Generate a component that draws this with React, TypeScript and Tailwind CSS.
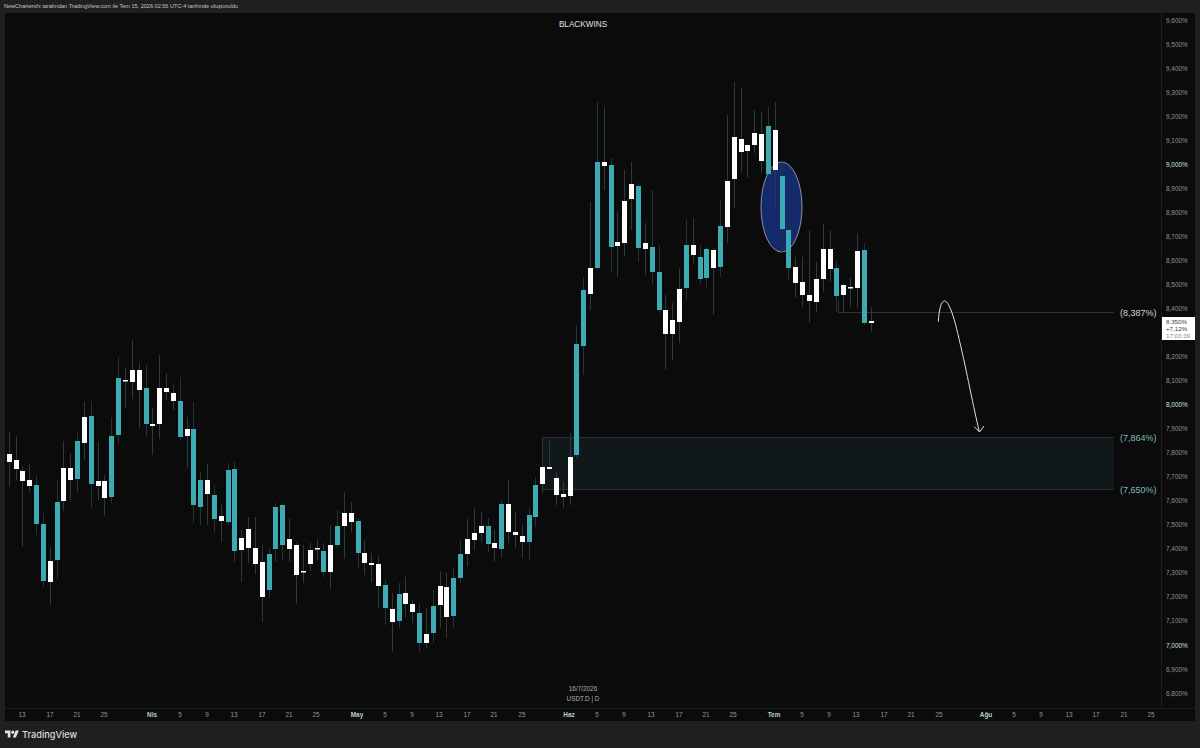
import React from "react";

type C = [number, number, number, number, number];
// [0 = white / 1 = teal, body top, body bottom, wick top, wick bottom]
const candles: C[] = [
  [0,454,462,432,487],[0,460,469,436,480],[0,471,481,466,547],[0,480,486,464,492],[1,485,524,475,535],
  [1,524,581,513,587],[0,561,582,547,605],[1,502,560,480,579],[0,468,501,441,511],[0,468,480,453,500],
  [1,441,479,433,493],[0,417,443,402,460],[1,416,484,401,508],[0,481,486,442,500],[0,481,498,475,516],
  [1,436,497,417,503],[1,378,435,357,444],[0,380,381,368,408],[0,370,382,340,399],[0,370,390,363,428],
  [1,388,424,365,437],[0,424,426,408,455],[0,388,424,355,439],[0,388,392,373,400],[0,393,401,385,410],
  [1,401,437,377,440],[0,429,436,417,468],[1,429,505,402,523],[1,480,507,472,525],[0,480,494,464,525],
  [1,495,519,485,532],[0,516,521,505,542],[1,470,522,463,525],[1,469,551,462,562],[0,538,550,530,582],
  [0,529,548,517,563],[0,548,564,517,574],[0,562,597,545,622],[1,554,590,548,598],[1,507,549,503,562],
  [1,505,545,503,560],[0,539,549,518,562],[0,545,575,543,604],[0,571,572,545,583],[0,550,564,543,571],
  [0,548,549,539,560],[1,551,572,543,577],[0,545,572,525,589],[1,526,545,510,548],[0,513,526,492,559],
  [0,513,522,502,532],[1,521,553,518,568],[0,553,563,540,575],[0,563,565,553,582],[0,564,586,556,608],
  [1,585,608,580,625],[0,609,622,593,652],[1,594,621,583,628],[0,593,604,577,617],[0,604,612,600,623],
  [1,613,643,603,652],[0,634,643,608,648],[1,606,633,590,643],[0,586,605,572,628],[0,587,617,573,638],
  [1,578,616,568,628],[1,554,578,540,583],[0,539,554,519,566],[0,533,540,508,550],[0,526,533,512,543],
  [1,526,544,518,552],[0,543,548,530,562],[1,504,549,500,558],[0,504,532,480,543],[0,532,535,512,548],
  [0,536,542,525,558],[1,515,542,507,560],[1,485,517,477,527],[0,467,484,437,493],[0,467,469,441,470],
  [0,478,495,472,505],[0,494,497,482,508],[0,457,496,433,505],[1,344,455,325,458],[1,290,346,277,375],
  [0,268,294,202,310],[1,162,268,102,270],[0,162,166,107,190],[1,165,247,158,272],[0,242,246,212,277],
  [0,201,243,170,256],[0,184,199,162,230],[1,186,248,183,262],[0,243,249,223,275],[1,247,272,190,285],
  [1,272,310,245,313],[0,310,334,295,370],[0,320,334,303,360],[0,289,322,268,343],[1,245,288,220,300],
  [0,245,255,218,263],[1,257,279,245,284],[1,249,278,247,287],[0,250,268,248,315],[1,226,267,200,277],
  [0,181,227,115,243],[0,137,179,82,208],[0,139,152,88,172],[0,145,151,145,178],[0,133,145,110,153],
  [0,134,161,112,173],[1,126,174,107,177],[0,130,170,102,208],[1,176,229,162,252],[1,230,268,220,280],
  [0,267,283,257,298],[0,282,295,257,307],[0,295,301,230,323],[0,279,302,262,312],[0,249,279,224,292],
  [0,249,269,230,282],[1,268,296,260,312],[0,285,295,283,312],[0,287,288,278,307],[0,251,288,233,308],
  [1,250,323,243,325],[0,321,323,307,332],
];

const prices: [string, boolean][] = [
  ["9,600%",false],["9,500%",false],["9,400%",false],["9,300%",false],["9,200%",false],["9,100%",false],
  ["9,000%",true],["8,900%",false],["8,800%",false],["8,700%",false],["8,600%",false],["8,500%",false],
  ["8,400%",false],["",false],["8,200%",false],["8,100%",false],["8,000%",true],["7,900%",false],
  ["7,800%",false],["7,700%",false],["7,600%",false],["7,500%",false],["7,400%",false],["7,300%",false],
  ["7,200%",false],["7,100%",false],["7,000%",true],["6,900%",false],["6,800%",false],
];

const ticks: [string, number, boolean][] = [
  ["13",22,false],["17",50,false],["21",77,false],["25",104,false],["Nis",152,true],["5",180,false],["9",207,false],
  ["13",234,false],["17",262,false],["21",289,false],["25",316,false],["May",357,true],["5",385,false],["9",412,false],
  ["13",439,false],["17",467,false],["21",494,false],["25",522,false],["Haz",569,true],["5",597,false],["9",624,false],
  ["13",651,false],["17",679,false],["21",706,false],["25",733,false],["Tem",774,true],["5",802,false],["9",829,false],
  ["13",856,false],["17",884,false],["21",911,false],["25",939,false],["Ağu",986,true],["5",1014,false],["9",1041,false],
  ["13",1069,false],["17",1096,false],["21",1124,false],["25",1151,false],
];

const TICK_W = 20;
function tickMargin(i: number) {
  return i === 0 ? ticks[0][1] - 5 - TICK_W / 2 : ticks[i][1] - ticks[i - 1][1] - TICK_W;
}

function Chart() {
  return (
    <svg className="absolute inset-0 w-full h-full" viewBox="5 13 1156 695" fontFamily="'Liberation Sans', sans-serif">
      <rect x="542" y="437" width="572" height="53" fill="#11181a" />
      <line x1="542" x2="1114" y1="437.5" y2="437.5" stroke="#213335" />
      <line x1="542" x2="1114" y1="489.5" y2="489.5" stroke="#213335" />
      <line x1="838" x2="1114" y1="312.5" y2="312.5" stroke="#2f3132" />
      <line x1="838.5" x2="838.5" y1="300" y2="312.5" stroke="#2f3132" />
      <ellipse cx="781.5" cy="207" rx="20.5" ry="45" fill="#15296d" stroke="#8a92a3" strokeWidth="1" />
      {candles.map((c, i) => {
        const x = Math.round(8.7 + 6.84 * i);
        return <line key={i} x1={x + 0.5} x2={x + 0.5} y1={c[3]} y2={c[4]} stroke={c[0] ? "#1f3538" : "#2a3b3d"} />;
      })}
      {candles.map((c, i) => {
        const x = Math.round(8.7 + 6.84 * i);
        return (
          <rect
            key={i}
            x={x - 2}
            y={c[1]}
            width="5"
            height={Math.max(c[2] - c[1], 1.5)}
            fill={c[0] ? "#3eaab4" : "#ffffff"}
          />
        );
      })}
      <path
        d="M938.3 321.7C939 310 941 301 944.5 301C950 301 956 325 960 343C966 368 974 410 979.3 431.5"
        fill="none"
        stroke="#e0e0e0"
        strokeWidth="1"
      />
      <path d="M974.3 426.7L979.5 432L984 426" fill="none" stroke="#e0e0e0" strokeWidth="1" />
      <text x="1120" y="316.2" fontSize="9" fill="#d4d4d4">(8,387%)</text>
      <text x="1120" y="441.2" fontSize="9" fill="#82bab8">(7,864%)</text>
      <text x="1120" y="493.2" fontSize="9" fill="#82bab8">(7,650%)</text>
    </svg>
  );
}

export default function App() {
  return (
    <div className="w-[1200px] h-[748px] bg-[#1f1f1f] flex flex-col overflow-hidden font-['Liberation_Sans',sans-serif]">
      <div className="h-[13px] pl-[4px] flex items-center text-[5.55px] text-[#c4c4c4] whitespace-nowrap">
        NewChartersfx tarafından TradingView.com ile Tem 15, 2026 02:56 UTC-4 tarihinde oluşturuldu
      </div>
      <div className="h-[708px] px-[5px] flex flex-col">
        <div className="h-[695px] flex">
          <div className="relative w-[1156px] bg-[#0b0b0c] overflow-hidden flex flex-col items-center">
            <Chart />
            <div className="relative pt-[5px] text-[8.2px] text-[#e0e0e0] leading-[13px]">BLACKWINS</div>
            <div className="relative mt-auto pb-[4px] flex flex-col items-center text-[6.4px] leading-[10px] text-[#a9b0b0]">
              <span>16/7/2026</span>
              <span>USDT.D | D</span>
            </div>
          </div>
          <div className="relative w-[34px] bg-[#0b0b0c] border-l border-[#1d1d1d] overflow-hidden">
            <div className="-mt-[4.5px] flex flex-col">
              {prices.map(([p, major], i) => (
                <div
                  key={i}
                  className={
                    major
                      ? "h-[24.04px] shrink-0 flex items-center pl-[4px] text-[6.4px] text-[#d2e4e6]"
                      : "h-[24.04px] shrink-0 flex items-center pl-[4px] text-[6.4px] text-[#879b9c]"
                  }
                >
                  {p}
                </div>
              ))}
            </div>
            <div className="absolute left-0 right-0 top-[304px] h-[23px] bg-white flex flex-col justify-center pl-[4px] text-[6.2px] leading-[7.2px] text-[#3a3a3a]">
              <span>8,350%</span>
              <span>+7,12%</span>
              <span className="text-[#8a8a8a]">17:03:39</span>
            </div>
          </div>
        </div>
        <div className="h-[13px] bg-[#0b0b0c] border-t border-[#1d1d1d] flex items-center overflow-hidden">
          {ticks.map(([t, , major], i) => (
            <div
              key={i}
              style={{ marginLeft: tickMargin(i) }}
              className={
                major
                  ? "w-[20px] shrink-0 text-center text-[6.4px] font-bold text-[#b7d0d4]"
                  : "w-[20px] shrink-0 text-center text-[6.4px] text-[#879b9c]"
              }
            >
              {t}
            </div>
          ))}
        </div>
      </div>
      <div className="h-[27px] pl-[5px] flex items-center gap-[3px]">
        <svg width="14" height="11" viewBox="0 0 36 28" fill="#e2e2e2">
          <path d="M14 22H7V11H0V4h14v18zM28 22h-8l7.5-18h8L28 22z" />
          <circle cx="20" cy="8" r="4" />
        </svg>
        <span className="text-[9.2px] font-['Inter',sans-serif] font-medium text-[#dcdcdc]">TradingView</span>
      </div>
    </div>
  );
}
